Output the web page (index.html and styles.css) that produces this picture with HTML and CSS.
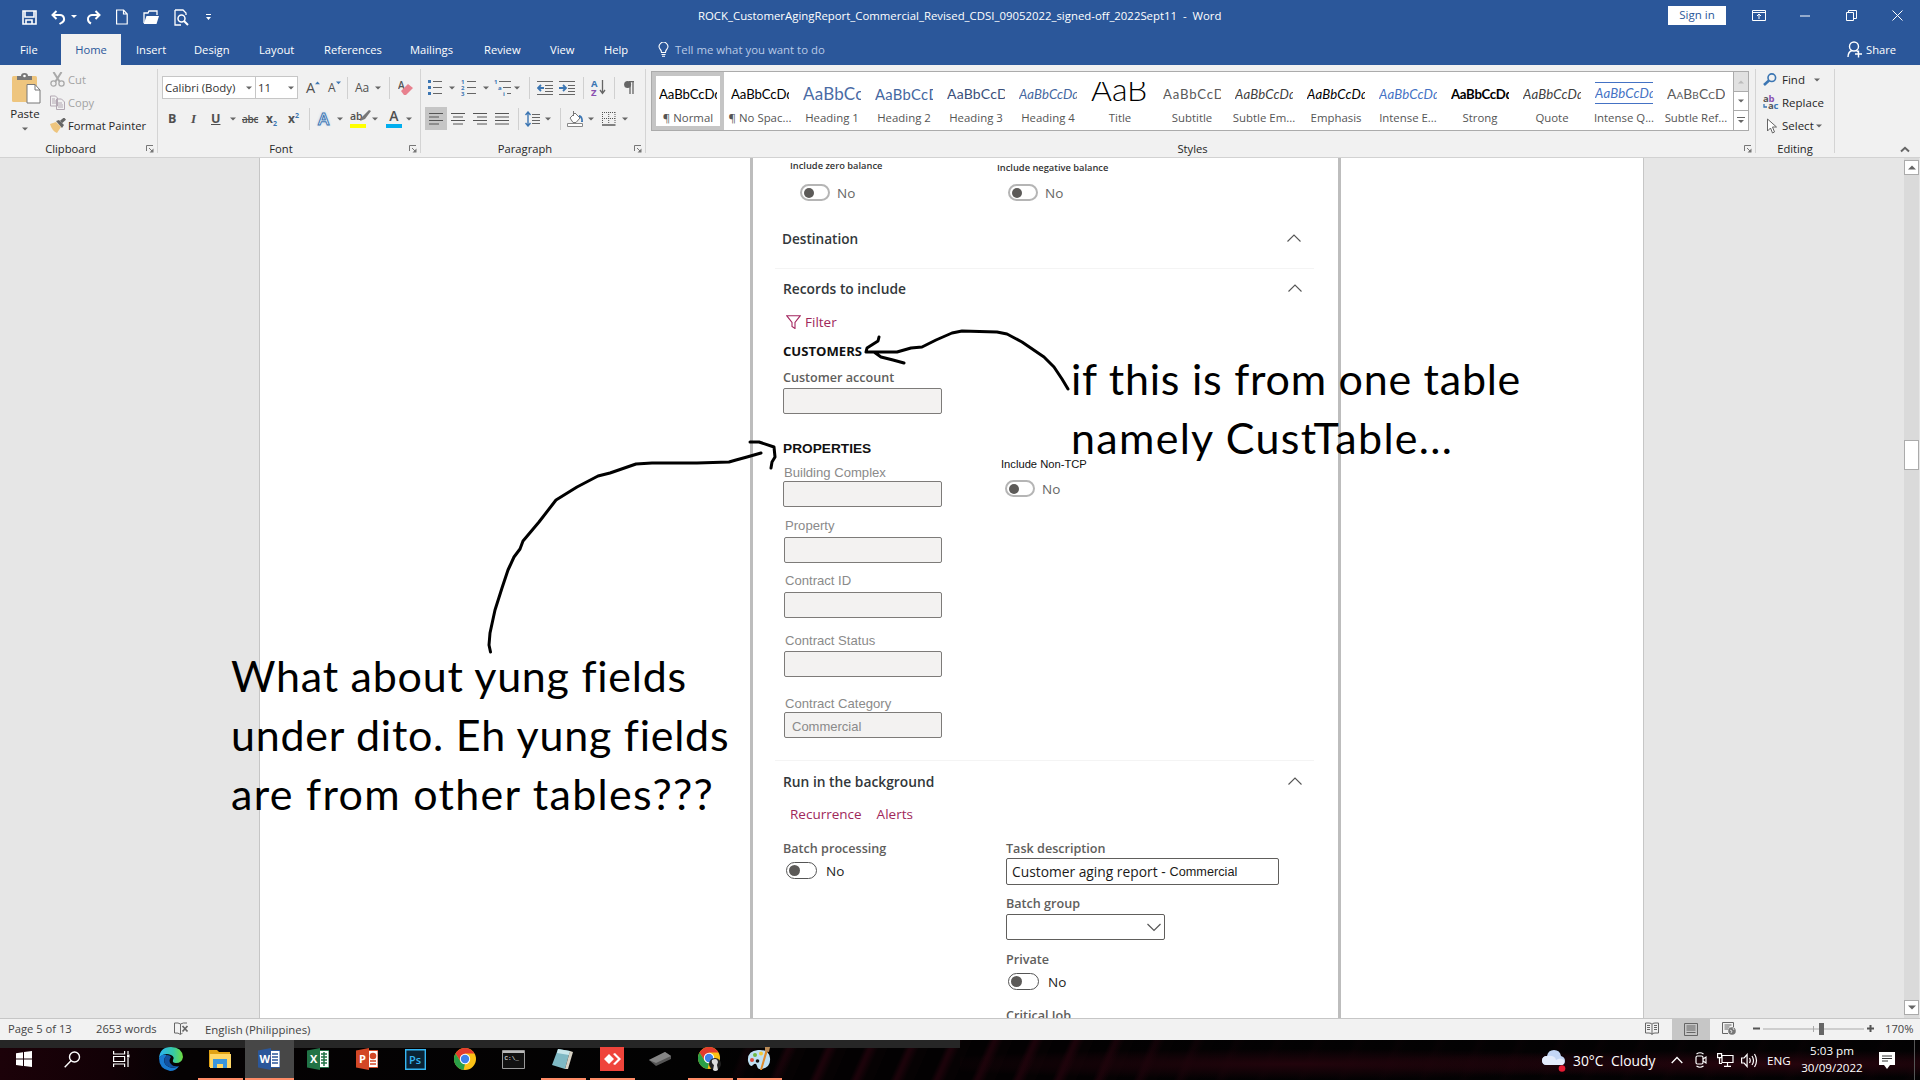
FILE: index.html
```html
<!DOCTYPE html>
<html lang="en">
<head>
<meta charset="utf-8">
<title>ROCK_CustomerAgingReport - Word</title>
<link rel="stylesheet" href="styles.css">
</head>
<body>
<svg class="defs" width="0" height="0">
  <symbol id="dd" viewBox="0 0 6 4"><path d="M0 0.5h6L3 3.5z" fill="#666"/></symbol>
  <symbol id="launch" viewBox="0 0 8 8"><path d="M.5 6V.5H7M3 3l3 3" fill="none" stroke="#777"/><path d="M7.500 3.500v4h-4z" fill="#777"/></symbol>
  <symbol id="caret" viewBox="0 0 14 8"><path d="M.5 7.500L7 1l6.500 6.500" fill="none" stroke="#555" stroke-width="1.100"/></symbol>
</svg>
<header class="titlebar">
  <div class="qat">
    <svg width="15" height="15" viewBox="0 0 15 15"><path d="M1 1h13v13H1zM3 1v6h9V1M4 14v-4h6v4" fill="none" stroke="#fff" stroke-width="1.600"/></svg>
    <svg width="15" height="15" viewBox="0 0 15 15"><path d="M5.500 1L1.500 5l4 4M2 5h7a4 4 0 0 1 2 7.500L8.500 14" fill="none" stroke="#fff" stroke-width="2"/></svg>
    <svg width="6" height="4" viewBox="0 0 6 4"><path d="M0 0h6L3 3z" fill="#fff"/></svg>
    <svg width="15" height="15" viewBox="0 0 15 15"><path d="M9.500 1l4 4-4 4M13 5H6a4 4 0 0 0-4 4.500q0 2.500 3 4" fill="none" stroke="#fff" stroke-width="2"/></svg>
    <svg width="12" height="16" viewBox="0 0 12 16"><path d="M.6 1h7l3.600 4v10H.6zM7.500 1v4H11" fill="none" stroke="#fff" stroke-width="1.200"/></svg>
    <svg width="16" height="15" viewBox="0 0 16 15"><path d="M1 13V3h4l1-2h8v4" fill="none" stroke="#fff" stroke-width="1.300"/><path d="M3.500 6H16l-2.500 8H.7z" fill="#fff"/></svg>
    <svg width="15" height="17" viewBox="0 0 15 17"><path d="M1 1h8l3 3v2M1 1v15h6" fill="none" stroke="#fff" stroke-width="1.300"/><circle cx="7.500" cy="9.500" r="3.500" fill="none" stroke="#fff" stroke-width="1.500"/><path d="M10 12l4 4" stroke="#fff" stroke-width="2"/></svg>
    <svg width="7" height="7" viewBox="0 0 7 7"><path d="M1 0h5v1H1zM1 3h5L3.500 6z" fill="#fff"/></svg>
  </div>
  <div class="doctitle">ROCK_CustomerAgingReport_Commercial_Revised_CDSI_09052022_signed-off_2022Sept11&nbsp; -&nbsp; Word</div>
  <div class="signin">Sign in</div>
  <div class="winbtn"><svg width="14" height="11" viewBox="0 0 14 11"><path d="M.5.5h13v10H.5zM.5 2.500h13M7 9V4M5 6l2-2 2 2" fill="none" stroke="#fff"/></svg></div>
  <div class="winbtn"><svg width="10" height="2"><path d="M0 1h10" stroke="#fff"/></svg></div>
  <div class="winbtn"><svg width="11" height="11" viewBox="0 0 11 11"><path d="M.5 2.500h7v8h-7zM2.500 2.500v-2h8v8H8" fill="none" stroke="#fff"/></svg></div>
  <div class="winbtn"><svg width="11" height="11" viewBox="0 0 11 11"><path d="M.5.5l10 10M10.500.5l-10 10" stroke="#fff"/></svg></div>
</header>
<nav class="tabs">
  <span>File</span><span class="on">Home</span><span>Insert</span><span>Design</span><span>Layout</span><span>References</span><span>Mailings</span><span>Review</span><span>View</span><span>Help</span>
  <svg width="11" height="15" viewBox="0 0 11 15"><path d="M3.500 10.500q0-2-1.500-3.500a4.300 4.300 0 1 1 7 0q-1.500 1.500-1.500 3.500zM3.500 12.500h4M4 14.300h3" fill="none" stroke="#fff" stroke-width="1.100"/></svg>
  <span class="tell">Tell me what you want to do</span>
  <svg width="16" height="17" viewBox="0 0 16 17"><circle cx="7" cy="5.500" r="4.500" fill="none" stroke="#fff" stroke-width="1.400"/><path d="M1 16q0-5 4-6.500M9 9l2 2M8 13h7M11.500 9.500v7" fill="none" stroke="#fff" stroke-width="1.400"/></svg>
  <span class="share">Share</span>
</nav>
<section class="ribbon">
  <div class="group clip">
    <div class="content clipgrid">
      <div class="paste">
        <svg width="29" height="31" viewBox="0 0 29 31"><rect x="0" y="3" width="25" height="26" rx="1.500" fill="#eec57e"/><path d="M5 3h4q0-3 3.500-3T16 3h4v4H5z" fill="#777"/><circle cx="12.500" cy="3" r="1.300" fill="#fff"/><path d="M15 11.500h8l5 5.500v13H15z" fill="#fff" stroke="#777"/><path d="M23 11.500V17h5" fill="none" stroke="#777"/></svg>
        <span>Paste</span><svg width="6" height="4"><use href="#dd"/></svg>
      </div>
      <div class="cliplist">
        <svg width="15" height="15" viewBox="0 0 15 15"><path d="M3.500 0l6 9.500M11.500 0l-6 9.500" stroke="#a9a9a9" stroke-width="2"/><circle cx="3.500" cy="11.500" r="2.600" fill="none" stroke="#a9a9a9" stroke-width="1.300"/><circle cx="11.500" cy="11.500" r="2.600" fill="none" stroke="#a9a9a9" stroke-width="1.300"/></svg><span class="dim">Cut</span>
        <svg width="16" height="15" viewBox="0 0 16 15"><path d="M.5 1h5l2 2v8h-7zM2 4h3M2 6h4M2 8h4M6.500 4h5l3 3v7.500h-8zM8 8h4M8 10h5M8 12h5" fill="#f1f1f1" stroke="#b3a8b3"/></svg><span class="dim">Copy</span>
        <svg width="16" height="15" viewBox="0 0 16 15"><path d="M0 6l6-2 5 5-4 6q-5-2-7-9z" fill="#eec57e"/><path d="M6 3l3-1 5 5-2 3z" fill="#666"/><path d="M11 4l4-3.500" stroke="#666" stroke-width="3"/></svg><span>Format Painter</span>
      </div>
    </div>
    <div class="glabel"><span>Clipboard</span><svg width="8" height="8"><use href="#launch"/></svg></div>
  </div>
  <div class="group font">
    <div class="content rows">
      <div class="frow1">
        <div class="combo fam"><span>Calibri (Body)</span><svg width="6" height="4"><use href="#dd"/></svg></div>
        <div class="combo size"><span>11</span><svg width="6" height="4"><use href="#dd"/></svg></div>
        <span class="g">A<svg width="5" height="4" viewBox="0 0 6 4"><path d="M0 3.500h6L3 .3z" fill="#3c76b3"/></svg></span><span class="g sm">A<svg width="5" height="4" viewBox="0 0 6 4"><path d="M0 .3h6L3 3.500z" fill="#3c76b3"/></svg></span><i class="sep"></i><span class="g aa">Aa</span><svg width="6" height="4"><use href="#dd"/></svg><i class="sep"></i>
        <svg width="16" height="16" viewBox="0 0 16 16"><text x="0" y="9" class="ticon">A</text><path d="M3 11l7-7 5 4-7 7H6z" fill="#e8818e"/></svg>
      </div>
      <div class="frow2">
        <b>B</b><i class="it">I</i><span class="ul">U</span><svg width="6" height="4"><use href="#dd"/></svg><span class="st">abc</span><span class="xx">x<sub>2</sub></span><span class="xx">x<sup>2</sup></span><i class="sep"></i><span class="glow">A</span><svg width="6" height="4"><use href="#dd"/></svg>
        <span class="bar hl">ab<svg width="12" height="12" viewBox="0 0 12 12"><path d="M1 11l2-4 7-7 2 1-6 8z" fill="#777"/></svg></span><svg width="6" height="4"><use href="#dd"/></svg><span class="bar fc">A</span><svg width="6" height="4"><use href="#dd"/></svg>
      </div>
    </div>
    <div class="glabel"><span>Font</span><svg width="8" height="8"><use href="#launch"/></svg></div>
  </div>
  <div class="group para">
    <div class="content rows">
      <div class="prow1">
        <svg width="14" height="16" viewBox="0 0 14 16"><path d="M0 0h3v3H0zM0 6h3v3H0zM0 12h3v3H0z" fill="#3c76b3"/><path d="M5 1.500h9M5 7.500h9M5 13.500h9" stroke="#666"/></svg><svg width="6" height="4"><use href="#dd"/></svg>
        <svg width="16" height="17" viewBox="0 0 16 17"><path d="M6 2.500h9M6 8.500h9M6 14.500h9" stroke="#666"/><text x="0" y="5" class="num">1</text><text x="0" y="11" class="num">2</text><text x="0" y="17" class="num">3</text></svg><svg width="6" height="4"><use href="#dd"/></svg>
        <svg width="18" height="17" viewBox="0 0 18 17"><path d="M5 2.500h12M9 8.500h8M13 14.500h4" stroke="#666"/><text x="0" y="5" class="num">1</text><text x="4" y="11" class="num">a</text><text x="9" y="17" class="num">i</text></svg><svg width="6" height="4"><use href="#dd"/></svg><i class="sep"></i>
        <svg width="16" height="14" viewBox="0 0 16 14"><path d="M0 .5h16M8 4.500h8M8 7.500h8M8 10.500h8M0 13.500h16" stroke="#666"/><path d="M1 7h6M4 4L1 7l3 3" fill="none" stroke="#3c76b3" stroke-width="1.800"/></svg>
        <svg width="16" height="14" viewBox="0 0 16 14"><path d="M0 .5h16M9 4.500h7M9 7.500h7M9 10.500h7M0 13.500h16" stroke="#666"/><path d="M0 7h7M4 4l3 3-3 3" fill="none" stroke="#3c76b3" stroke-width="1.800"/></svg><i class="sep"></i>
        <svg width="15" height="17" viewBox="0 0 15 17"><text x="0" y="8" class="az">A</text><text x="0" y="16.500" class="az z">Z</text><path d="M11.500 1v13M9 11l2.500 3.500L14 11" fill="none" stroke="#666" stroke-width="1.300"/></svg><i class="sep"></i>
        <svg width="11" height="13" viewBox="0 0 11 13"><path d="M10 .7H5M6 1v12M9 1v12" stroke="#666" stroke-width="1.300"/><circle cx="3.600" cy="3.500" r="3.500" fill="#666"/></svg>
      </div>
      <div class="prow2">
        <span class="sel"><svg width="14" height="12" viewBox="0 0 14 12"><path d="M0 .5h14M0 4h10M0 7.500h14M0 11h10" stroke="#555"/></svg></span>
        <svg width="14" height="12" viewBox="0 0 14 12"><path d="M0 .5h14M2 4h10M0 7.500h14M2 11h10" stroke="#555"/></svg>
        <svg width="14" height="12" viewBox="0 0 14 12"><path d="M0 .5h14M4 4h10M0 7.500h14M4 11h10" stroke="#555"/></svg>
        <svg width="14" height="12" viewBox="0 0 14 12"><path d="M0 .5h14M0 4h14M0 7.500h14M0 11h14" stroke="#555"/></svg><i class="sep"></i>
        <svg width="15" height="16" viewBox="0 0 15 16"><path d="M7 3.500h8M7 6.500h8M7 9.500h8M7 12.500h8" stroke="#666"/><path d="M3 1v14M.5 4L3 1l2.500 3M.5 12L3 15l2.500-3" fill="none" stroke="#3c76b3" stroke-width="1.400"/></svg><svg width="6" height="4"><use href="#dd"/></svg><i class="sep"></i>
        <svg width="17" height="16" viewBox="0 0 17 16"><path d="M.5 12.500h15v3H.5z" fill="#fff" stroke="#888"/><path d="M3 7l5-5 5 5-4 4.500H6zM6.500 0v5" fill="#fff" stroke="#777"/><path d="M12 4q4 0 4 7h-2q1-4-2-5z" fill="#3c76b3"/></svg><svg width="6" height="4"><use href="#dd"/></svg>
        <svg width="14" height="14" viewBox="0 0 14 14"><path d="M.5 0v12M13 0v12M6.700 0v12M0 .5h13M0 6.500h13" stroke="#555" stroke-dasharray="1 1"/><path d="M0 13h13.500" stroke="#444" stroke-width="1.300"/></svg><svg width="6" height="4"><use href="#dd"/></svg>
      </div>
    </div>
    <div class="glabel"><span>Paragraph</span><svg width="8" height="8"><use href="#launch"/></svg></div>
  </div>
  <div class="group styles">
    <div class="content">
      <div class="gallery">
        <div class="style picked"><p class="s blk">AaBbCcDd</p><span>¶ Normal</span></div>
        <div class="style"><p class="s blk">AaBbCcDd</p><span>¶ No Spac...</span></div>
        <div class="style"><p class="s h1">AaBbCc</p><span>Heading 1</span></div>
        <div class="style"><p class="s h2">AaBbCcD</p><span>Heading 2</span></div>
        <div class="style"><p class="s h3">AaBbCcD</p><span>Heading 3</span></div>
        <div class="style"><p class="s h4">AaBbCcDd</p><span>Heading 4</span></div>
        <div class="style"><p class="s ttl">AaB</p><span>Title</span></div>
        <div class="style"><p class="s sub">AaBbCcD</p><span>Subtitle</span></div>
        <div class="style"><p class="s em">AaBbCcDd</p><span>Subtle Em...</span></div>
        <div class="style"><p class="s em blk">AaBbCcDd</p><span>Emphasis</span></div>
        <div class="style"><p class="s em blu">AaBbCcDd</p><span>Intense E...</span></div>
        <div class="style"><p class="s strong">AaBbCcDd</p><span>Strong</span></div>
        <div class="style"><p class="s em">AaBbCcDd</p><span>Quote</span></div>
        <div class="style"><p class="s em blu lines">AaBbCcDd</p><span>Intense Q...</span></div>
        <div class="style"><p class="s caps">AaBbCcDd</p><span>Subtle Ref...</span></div>
        <div class="gscroll">
          <div class="off"><svg width="6" height="4" viewBox="0 0 6 4"><path d="M0 3.500h6L3 .5z" fill="#bbb"/></svg></div>
          <div><svg width="6" height="4"><use href="#dd"/></svg></div>
          <div><svg width="8" height="7" viewBox="0 0 8 7"><path d="M0 .5h8" stroke="#666"/><path d="M1 3h6L4 6z" fill="#666"/></svg></div>
        </div>
      </div>
    </div>
    <div class="glabel"><span>Styles</span><svg width="8" height="8"><use href="#launch"/></svg></div>
  </div>
  <div class="group edit">
    <div class="content editlist">
      <svg width="14" height="13" viewBox="0 0 14 13"><circle cx="8.800" cy="4.700" r="3.800" fill="none" stroke="#3c76b3" stroke-width="1.600"/><path d="M6 7.500L1 12" stroke="#3c76b3" stroke-width="2.600"/></svg><span>Find<svg class="far" width="6" height="4"><use href="#dd"/></svg></span>
      <svg width="17" height="17" viewBox="0 0 17 17"><text x="0" y="8" class="rep">a<tspan fill="#8a4fb0">b</tspan></text><text x="5" y="15" class="rep">a<tspan fill="#3c76b3">c</tspan></text><path d="M1 10v3h3" fill="none" stroke="#3c76b3" stroke-width="1.300"/></svg><span>Replace</span>
      <svg width="16" height="16" viewBox="0 0 16 16"><path d="M4.500 1v12l3-3 2 5 2-1-2-5h4z" fill="#fff" stroke="#666"/></svg><span>Select<svg class="near" width="6" height="4"><use href="#dd"/></svg></span>
    </div>
    <div class="glabel"><span>Editing</span></div>
  </div>
  <div class="collapse"><svg width="10" height="7" viewBox="0 0 10 7"><path d="M1 5.500L5 1.800l4 3.700" fill="none" stroke="#666" stroke-width="2"/></svg></div>
</section>

<main class="doc">
  <div class="page">
    <div class="panel">
      <div class="cols balance">
        <div><p class="tiny z">Include zero balance</p><div class="tg soft z"><i></i>No</div></div>
        <div><p class="tiny n">Include negative balance</p><div class="tg soft n"><i></i>No</div></div>
      </div>
      <div class="head dest"><span>Destination</span><svg width="14" height="8"><use href="#caret"/></svg></div>
      <div class="head rec"><span>Records to include</span><svg width="14" height="8"><use href="#caret"/></svg></div>
      <div class="filter"><svg width="15" height="14" viewBox="0 0 15 14"><path d="M.7.700h13.600L9 7.500v6L6 11.500v-4z" fill="none" stroke="#a4265f" stroke-width="1.100"/></svg>Filter</div>
      <p class="cap">CUSTOMERS</p>
      <p class="lab">Customer account</p>
      <div class="box"></div>
      <p class="cap ar">PROPERTIES</p>
      <div class="cols props">
        <div>
          <p class="al a1">Building Complex</p><div class="box b1"></div>
          <p class="al a2">Property</p><div class="box b2"></div>
          <p class="al a3">Contract ID</p><div class="box b2"></div>
          <p class="al a4">Contract Status</p><div class="box b4"></div>
          <p class="al a5">Contract Category</p><div class="box b5">Commercial</div>
        </div>
        <div><p class="nontcp">Include Non-TCP</p><div class="tg soft t"><i></i>No</div></div>
      </div>
      <div class="head run"><span>Run in the background</span><svg width="14" height="8"><use href="#caret"/></svg></div>
      <div class="links"><span>Recurrence</span><span>Alerts</span></div>
      <div class="cols batch">
        <div><p class="lab">Batch processing</p><div class="tg b"><i></i>No</div></div>
        <div>
          <p class="lab">Task description</p><div class="inp wide"><span>Customer aging report -</span><em>Commercial</em></div>
          <p class="lab bg">Batch group</p><div class="inp"><svg width="14" height="9" viewBox="0 0 14 9"><path d="M.5 1L7 7.500 13.500 1" fill="none" stroke="#555" stroke-width="1.200"/></svg></div>
          <p class="lab pv">Private</p><div class="tg p"><i></i>No</div>
          <p class="lab cj">Critical Job</p>
        </div>
      </div>
    </div>
  </div>
  <div class="vscroll">
    <div class="btn"><svg width="8" height="5" viewBox="0 0 8 5"><path d="M0 4.500h8L4 .5z" fill="#666"/></svg></div>
    <div class="thumb"></div>
    <div class="btn"><svg width="8" height="5" viewBox="0 0 8 5"><path d="M0 .5h8L4 4.500z" fill="#666"/></svg></div>
  </div>
  <svg class="ink" width="1920" height="860" viewBox="0 158 1920 860">
    <path d="M1068 389L1062 379 1054 367 1044 357 1022 342 1007 334 997 332 962 331 952 333 936 340 922 347 911 348 897 352 867 352M879 337L878 341 867 348 866 352 874 352 881 357 893 360 904 363"/>
    <path d="M490.500 652L489 645 490 633 495 610 502 588 508 570 514 557 520 549 523 541 539 522 556 500 577 487 598 476 610 473 636 464 652 463 697 463 729 462 736 460 747 457 761 453M750 442L759 442 774 447 775 457 772 462 771 468"/>
  </svg>
  <p class="note first"><span>if this is from one table</span><br><span class="loose">namely CustTable...</span></p>
  <p class="note second"><span>What about yung fields</span><br><span>under dito. Eh yung fields</span><br><span class="loose">are from other tables???</span></p>
</main>

<footer class="status">
  <span>Page 5 of 13</span><span>2653 words</span>
  <svg width="15" height="14" viewBox="0 0 15 14"><path d="M6.500 12V2q-2-1.500-6-1v10q4-.5 6 1.500 1-1 2-1.300M6.500 2Q9 .500 13 1" fill="none" stroke="#666"/><path d="M8.500 4l5 5.500M13.500 4l-5 5.500" stroke="#666" stroke-width="1.700"/></svg>
  <span class="lang">English (Philippines)</span>
  <svg width="14" height="13" viewBox="0 0 14 13"><path d="M7 2.500v10M.5 1H4q3 0 3 1.500Q7 1 10 1h3.500v10H10q-3 0-3 1.500Q7 11 4 11H.5zM2 3.500h3M2 5.500h3M2 7.500h3M9 3.500h3M9 5.500h3M9 7.500h3" fill="none" stroke="#666"/></svg>
  <div class="cur"><svg width="14" height="13" viewBox="0 0 14 13"><path d="M.5.500h13v12H.5zM2.500 3h9M2.500 5h9M2.500 7h9M2.500 9.500h9" fill="none" stroke="#666"/></svg></div>
  <svg width="14" height="13" viewBox="0 0 14 13"><path d="M6 11.500H.5V.500h11V5M2.500 3h7M2.500 5h5M2.500 7h4" fill="none" stroke="#666"/><circle cx="10" cy="9" r="3.800" fill="#777"/><path d="M8 8l2 1-1 2M11 6l1 2" stroke="#ddd" fill="none"/></svg>
  <svg width="7" height="3"><path d="M0 1.500h7" stroke="#555" stroke-width="2"/></svg>
  <svg width="101" height="12" viewBox="0 0 101 12"><path d="M0 6h101M50.500 3v6" stroke="#aaa"/><path d="M56 0h5v12h-5z" fill="#666"/></svg>
  <svg width="7" height="7"><path d="M0 3.500h7M3.500 0v7" stroke="#555" stroke-width="2"/></svg>
  <span>170%</span>
</footer>

<div class="taskbar">
  <div class="apps">
    <div><svg width="16" height="16" viewBox="0 0 16 16"><path d="M0 2.200l7-1v6.400H0zM8 1l8-1v7.600H8zM0 8.500h7v6.400l-7-1zM8 8.500h8V16l-8-1z" fill="#fff"/></svg></div>
    <div><svg width="17" height="17" viewBox="0 0 17 17"><circle cx="10.500" cy="6" r="5" fill="none" stroke="#fff" stroke-width="1.400"/><path d="M7 9.700L.7 16.300" stroke="#fff" stroke-width="1.400"/></svg></div>
    <div><svg width="17" height="16" viewBox="0 0 17 16"><path d="M.6 0v3h11V0M.6 5.500h11v5H.6zM.6 16v-3h11v3M15 0v3M15 7v9" fill="none" stroke="#fff" stroke-width="1.200"/><path d="M14 3.500h2.500v3H14z" fill="#fff"/></svg></div>
    <div><svg width="24" height="24" viewBox="0 0 24 24"><defs><linearGradient id="eg" x1="0" x2="1"><stop offset="0" stop-color="#2bb5f5"/><stop offset=".6" stop-color="#37c9a5"/><stop offset="1" stop-color="#6fdc3e"/></linearGradient></defs><path d="M0 11Q1 0 12 0t12 10q-1 6-7 6-4 0-3-3 2-3-2-5Q5 5 0 11z" fill="url(#eg)"/><path d="M0 11q3-5 8-3-5 5-1 10 5 5 13 1-3 5-9 5Q0 22 0 11z" fill="#1879d0"/><path d="M8 8q-5 5-1 10 5 5 13 1-6 1-8-2-3-3 0-7-1-2-4-2z" fill="#12519f"/></svg></div>
    <div class="open"><svg width="22" height="20" viewBox="0 0 22 20"><path d="M0 1h8l2 2h11v15H0z" fill="#e0a215"/><path d="M1 5h21v14H1z" fill="#ffd766"/><path d="M4 10h14v9h-4v-4H8v4H4z" fill="#3b97dd"/></svg></div>
    <div class="open active"><svg width="22" height="22" viewBox="0 0 22 22"><path d="M12 2.500h10v17H12z" fill="#fff" stroke="#2b579a"/><path d="M14 6h6M14 9h6M14 12h6M14 15h6" stroke="#2b579a" stroke-width="1.500"/><path d="M0 2.500L13 0v22L0 19.500z" fill="#2b579a"/><text x="1.500" y="15" class="logo">W</text></svg></div>
    <div><svg width="22" height="22" viewBox="0 0 22 22"><path d="M12 2.500h10v17H12z" fill="#fff" stroke="#217346"/><path d="M14 6h6M14 9h6M14 12h6M14 15h6M17 4v14" stroke="#217346" stroke-width="1.500"/><path d="M0 2.500L13 0v22L0 19.500z" fill="#217346"/><text x="3" y="15" class="logo">X</text></svg></div>
    <div><svg width="22" height="22" viewBox="0 0 22 22"><path d="M12 2.500h10v17H12z" fill="#fff" stroke="#d24726"/><circle cx="17" cy="8" r="3.300" fill="#d24726"/><path d="M14 13h6M14 16h6" stroke="#d24726" stroke-width="1.500"/><path d="M0 2.500L13 0v22L0 19.500z" fill="#d24726"/><text x="3" y="15" class="logo">P</text></svg></div>
    <div><svg width="21" height="21" viewBox="0 0 21 21"><path d="M.7.700h19.600v19.600H.7z" fill="#0a2233" stroke="#35b5f2" stroke-width="1.400"/><text x="4" y="15" class="ps">Ps</text></svg></div>
    <div><svg width="22" height="22" viewBox="0 0 22 22"><circle cx="11" cy="11" r="11" fill="#fbc116"/><path d="M1.500 5.500a11 11 0 0 1 19 0H11L6.500 13.500z" fill="#e33b2e"/><path d="M1.500 5.500l5 8L11 16l-1.500 6A11 11 0 0 1 1.500 5.500z" fill="#2a9f47"/><circle cx="11" cy="11" r="5.200" fill="#fff"/><circle cx="11" cy="11" r="4.200" fill="#4081ec"/></svg></div>
    <div><svg width="23" height="19" viewBox="0 0 23 19"><path d="M.5.500h22v18H.5z" fill="#111" stroke="#999"/><path d="M1 2h21" stroke="#bbb" stroke-width="2"/><text x="2.500" y="10" class="cmd">C:\_</text></svg></div>
    <div class="open"><svg width="23" height="22" viewBox="0 0 23 22"><path d="M7 1l12 2-5 18-13-4z" fill="#7fb9c4"/><path d="M7 1l12 2-1 4L6 5z" fill="#c8e6ea"/><path d="M19 3l3 1-5 17-3 0z" fill="#d8d2c4"/></svg></div>
    <div class="open"><svg width="24" height="24" viewBox="0 0 24 24"><path d="M0 0h24v24H0z" fill="#ef443b"/><path d="M9 7l5 5-5 5-5-5zM13 7l2-1 6 6-6 6-2-1 5-5z" fill="#fff"/></svg></div>
    <div><svg width="23" height="16" viewBox="0 0 23 16"><path d="M0 9L16 1l6 4v3L7 15z" fill="#555"/><path d="M0 9L16 1l6 4L7 12z" fill="#858585"/></svg></div>
    <div class="open"><svg width="23" height="25" viewBox="0 0 23 25"><circle cx="11" cy="11" r="11" fill="#fbc116"/><path d="M1.500 5.500a11 11 0 0 1 19 0H11L6.500 13.500z" fill="#e33b2e"/><path d="M1.500 5.500l5 8L11 16l-1.500 6A11 11 0 0 1 1.500 5.500z" fill="#2a9f47"/><circle cx="11" cy="11" r="5.200" fill="#fff"/><circle cx="11" cy="11" r="4.200" fill="#4081ec"/><circle cx="17" cy="17" r="6" fill="#222"/><path d="M14 13q5-3 6 2l-1 3 1 5q-3 2-5 0l1-5q-3-2-2-5z" fill="#ddd"/></svg></div>
    <div class="open"><svg width="24" height="24" viewBox="0 0 24 24"><path d="M1 14Q0 4 11 3t12 8-8 11q-4 1-5-3t-4-1-5-4z" fill="#bfe0f3"/><circle cx="5" cy="13" r="2" fill="#e04c3c"/><circle cx="8" cy="8" r="2" fill="#6fb944"/><circle cx="14" cy="6.500" r="2" fill="#f1c93a"/><circle cx="10.500" cy="14" r="1.800" fill="#111"/><path d="M21 3l-6 20-2 0 6-21z" fill="#e08a2c"/><path d="M18 0h5l-1 5-4-1z" fill="#b98a56"/></svg></div>
  </div>
  <div class="tray">
    <svg width="24" height="25" viewBox="0 0 24 25"><path d="M5 17q-5 0-5-4.500T5 8q1-6 7-6t7 6q4 1 4 5t-4 4z" fill="#c3d6f5"/><path d="M0 12q1-4 5-4 8-1 9 4 4-3 8 0 1 5-3 5H5q-5 0-5-5z" fill="#e4ecfb"/><circle cx="20" cy="20.500" r="3.300" fill="#e81a32"/></svg>
    <span class="w">30°C</span><span class="w">Cloudy</span>
    <svg width="12" height="8" viewBox="0 0 12 8"><path d="M.7 7L6 1.500 11.300 7" fill="none" stroke="#fff" stroke-width="1.300"/></svg>
    <svg width="12" height="16" viewBox="0 0 12 16"><rect x="1" y="4" width="7" height="8" rx="1.500" fill="none" stroke="#fff" stroke-width="1.200"/><path d="M8 7l3-2v6L8 9M1.500 2Q5-.500 8.500 2M1.500 14q3.500 2.500 7 0" fill="none" stroke="#fff" stroke-width="1.100"/></svg>
    <svg width="17" height="14" viewBox="0 0 17 14"><path d="M5 2.500h11v7H5zM10.500 9.500v4M7 13.300h7M.6.600h4v4h-4zM2.500 4.500v6H5" fill="none" stroke="#fff" stroke-width="1.200"/></svg>
    <svg width="17" height="15" viewBox="0 0 17 15"><path d="M.6 5h2.500l3-3.500v12l-3-3.500H.6zM8.500 5q1.500 2.500 0 5M11 3q3 4.500 0 9M13.500 1q4 6.500 0 13" fill="none" stroke="#fff" stroke-width="1.200"/></svg>
    <span>ENG</span>
    <div class="clock">5:03 pm<br>30/09/2022</div>
    <svg width="16" height="17" viewBox="0 0 16 17"><path d="M0 0h16v13h-5l-3 4-3-4H0z" fill="#fff"/><path d="M3 4h10M3 6.500h10M3 9h6" stroke="#333"/></svg>
    <i class="peek"></i>
  </div>
</div>
</body>
</html>
```
FILE: styles.css
```css
* { box-sizing: border-box; }
body { margin: 0; width: 1920px; height: 1080px; overflow: hidden; display: flex; flex-direction: column; font-family: "Open Sans", "Noto Sans", sans-serif; font-size: 11.2px; color: #262626; white-space: nowrap; }
p { margin: 0; }
svg { display: block; flex: none; }
.defs { display: none; }

/* title bar and tabs */
.titlebar { height: 34px; flex: none; background: #2b579a; color: #fff; display: grid; grid-template-columns: 698px 970px 67px 47px 46px 46px 46px; align-items: center; }
.qat { display: grid; grid-template-columns: 29px 20px 15px 30px 27px 31px 31px 10px; padding-left: 22px; align-items: center; }
.doctitle { font-size: 11.38px; margin-top: -3px; }
.signin { background: #fff; color: #2b579a; width: 58px; height: 19px; line-height: 18px; text-align: center; margin-top: -3px; font-size: 11.5px; }
.winbtn { display: flex; justify-content: center; margin-top: -3px; }
.tabs { height: 31px; flex: none; background: #2b579a; color: #fff; display: grid; grid-template-columns: 41px 95px 58px 65px 65px 86px 74px 66px 54px 54px 17px 1172px 19px auto; align-items: center; }
.tabs > span { line-height: 31px; }
.tabs > span:first-child { padding-left: 20px; }
.tabs > .on { background: #f1f1f1; color: #2b579a; margin-left: 20px; width: 60px; text-align: center; }
.tabs > .tell { color: #b9cae6; font-size: 11.4px; }

/* ribbon */
.ribbon { height: 93px; flex: none; background: #f1f1f1; border-bottom: 1px solid #d2d2d2; display: flex; padding-top: 4px; }
.group { height: 84px; border-right: 1px solid #d4d4d4; }
.content { height: 72px; }
.glabel { display: flex; line-height: 16px; text-align: center; align-items: center; }
.glabel span { flex: 1; }
.glabel svg { margin-right: 3px; margin-left: 5px; }
.clip { width: 158px; }
.font { width: 263px; }
.para { width: 225px; }
.styles { width: 1110px; }
.edit { width: 79px; }
.clipgrid { display: grid; grid-template-columns: 50px auto; }
.paste { display: flex; flex-direction: column; align-items: center; padding-top: 4px; padding-left: 3px; font-size: 11.5px; }
.paste span { line-height: 20px; margin-bottom: 3px; margin-right: 3px; }
.paste svg:last-child { margin-right: 4px; }
.cliplist { display: grid; grid-template-columns: 18px auto; grid-template-rows: repeat(3, 23px); align-items: center; margin-top: -1px; }
.dim { color: #a3a3a3; }
.rows > div { height: 31px; display: grid; align-items: center; }
.rows { padding-top: 3px; }
.frow1 { grid-template-columns: 94px 50px 22px 19px 8px 20px 14px 9px 16px; padding-left: 4px; }
.frow2 { grid-template-columns: 23px 19px 20px 12px 24px 22px 21px 9px 19px 13px 22px 14px 20px 6px; padding-left: 10px; color: #505050; }
.prow1 { grid-template-columns: 21px 12px 22px 11px 20px 15px 8px 22px 24px 8px 23px 10px 12px; padding-left: 7px; }
.prow2 { grid-template-columns: 26px 22px 22px 23px 7px 20px 15px 7px 21px 14px 20px 6px; padding-left: 4px; }
.sep { width: 1px; height: 22px; background: #d0d0d0; }
.combo { height: 23px; background: #fff; border: 1px solid #c6c6c6; display: flex; align-items: center; justify-content: space-between; padding: 0 3px 0 2px; color: #333; font-size: 11.4px; }
.combo.size { width: 43px; margin-left: -1px; }
.g { font-size: 14.5px; color: #505050; line-height: 20px; display: flex; align-items: flex-start; }
.g svg { margin-top: 3px; }
.g.sm { font-size: 12px; }
.g.aa { font-size: 12px; }
.ticon { font: 600 10px "Open Sans"; fill: #555; }
.num { font: 700 6px "Open Sans"; fill: #3c76b3; }
.az { font: 700 9.5px "Open Sans"; fill: #3c76b3; }
.az.z { fill: #8a4fb0; }
.rep { font: 700 9.5px "Open Sans"; fill: #555; letter-spacing: -.2px; }
.frow2 b { font-size: 12.5px; }
.it { font: italic 700 13px "Liberation Serif", serif; }
.ul { font-weight: 700; text-decoration: underline; font-size: 12.5px; padding-left: 1px; }
.st { text-decoration: line-through; font-weight: 600; font-size: 10px; letter-spacing: -.3px; }
.xx { font-weight: 700; font-size: 12px; line-height: 14px; }
.xx sub, .xx sup { font-size: 7px; color: #3c76b3; line-height: 0; }
.glow { font-size: 17px; line-height: 20px; font-weight: 600; color: #fff; -webkit-text-stroke: 1px #3c76b3; text-shadow: 0 0 3px #9cc3ea; }
.bar { height: 18px; line-height: 12px; display: flex; font-weight: 600; }
.hl { border-bottom: 4px solid #ff0; width: 16px; font-size: 10.5px; }
.hl svg { margin-left: -4px; }
.fc { border-bottom: 4px solid #00aeef; width: 16px; justify-content: center; font-size: 14px; }
.sel { background: #c6c6c6; width: 22px; height: 23px; display: flex; align-items: center; justify-content: center; }
.gallery { width: 1098px; height: 60px; border: 1px solid #ababab; background: #fff; display: flex; }
.styles .content { padding: 2px 0 0 5px; }
.style { width: 72px; height: 58px; text-align: center; color: #555; padding-top: 10px; flex: none; font-size: 11.4px; }
.style span { display: block; line-height: 16px; margin-top: 6px; }
.picked { border: 4px solid #c5c5c5; padding-top: 6px; }
.picked span { margin-left: -4px; margin-right: -4px; }
.s { width: 58px; height: 22px; line-height: 24px; overflow: hidden; margin-left: 7px; text-align: left; font-family: Lato, "Open Sans", sans-serif; font-size: 13.2px; letter-spacing: -.1px; color: #404040; }
.picked .s { margin-left: 3px; }
.strong, .ttl { color: #000; }
.strong { font-weight: 700; letter-spacing: -.3px; }
.h1 { font-size: 17px; color: #4a6ba5; letter-spacing: .2px; }
.h2 { font-size: 14.8px; color: #45679f; letter-spacing: .3px; }
.h3 { font-size: 14px; color: #3a4f7a; letter-spacing: .2px; }
.h4 { font-style: italic; color: #45679f; letter-spacing: .1px; }
.ttl { font-size: 32px; font-weight: 300; line-height: 14px; height: 24px; margin-bottom: -2px; }
.sub { color: #5a5a5a; letter-spacing: .8px; }
.em { font-style: italic; letter-spacing: .2px; }
.blk { color: #000; }
.blu { color: #4472c4; }
.lines { border-top: 1px solid #4472c4; border-bottom: 1px solid #4472c4; line-height: 21px; }
.caps { font-variant: small-caps; color: #5a5a5a; font-size: 13.8px; letter-spacing: .1px; }
.gscroll { margin-left: auto; width: 15px; display: grid; grid-template-rows: 20px 19px 19px; border-left: 1px solid #ababab; }
.gscroll div { display: flex; align-items: center; justify-content: center; border-bottom: 1px solid #ababab; }
.gscroll div:last-child { border-bottom: 0; }
.off { background: #e1e1e1; }
.editlist { display: grid; grid-template-columns: 19px auto; grid-template-rows: repeat(3, 23px); padding-left: 7px; align-items: center; align-content: start; font-size: 11.5px; margin-top: -1px; height: 73px; }
.editlist span { display: flex; align-items: center; }
.far { margin-left: 9px; }
.near { margin-left: 2px; }
.collapse { margin: 77px 0 0 65px; }

/* document area */
.doc { height: 860px; flex: none; background: #e6e6e6; display: flex; justify-content: space-between; position: relative; overflow: hidden; }
.page { margin-left: 259px; width: 1385px; border: solid #c6c6c6; border-width: 0 1px; background: #fff; }
.panel { margin-left: 490px; width: 591px; height: 860px; border: solid #bdbdbd; border-width: 0 3px; padding: 0 24px 0 22px; font-size: 13.5px; color: #333; }
.cols { display: grid; padding-left: 8px; }
.balance { grid-template-columns: 214px auto; height: 58px; }
.tiny { font-size: 9.3px; font-weight: 600; line-height: 18px; }
.tiny.z { margin: -1px 0 0 7px; height: 17px; }
.tiny.n { margin-top: 1px; }
.tg { height: 18px; display: flex; align-items: center; gap: 8px; color: #222; }
.tg i { width: 31px; height: 17px; border: 1px solid #555; border-radius: 9px; display: flex; align-items: center; padding-left: 2px; margin-top: -1px; }
.tg i::before { content: ""; width: 11px; height: 11px; border-radius: 50%; background: #5c5a58; }
.soft { color: #666; gap: 7px; }
.soft i { width: 30px; border: 2px solid #b5b5b5; padding-left: 2px; }
.soft i::before { width: 10px; height: 10px; }
.tg.z { margin: 10px 0 0 17px; }
.tg.n { margin: 7px 0 0 11px; }
.head { display: flex; justify-content: space-between; align-items: center; padding: 0 12px 0 8px; font-weight: 600; font-size: 13.8px; color: #32373a; }
.head svg { margin-top: -2px; }
.dest { height: 53px; padding: 0 13px 8px 7px; border-bottom: 1px solid #f4f4f4; font-size: 13.6px; }
.dest svg { margin-top: 0; }
.rec { height: 39px; }
.filter { height: 28px; display: flex; align-items: center; gap: 4px; padding-left: 11px; color: #a0285a; }
.cap { padding-left: 8px; line-height: 31px; font-weight: 700; color: #111; font-size: 13.1px; }
.lab { line-height: 22px; margin-bottom: -2px; color: #605e5c; font-weight: 600; font-size: 12.6px; }
.box { width: 159px; height: 26px; background: #f3f2f1; border: 1px solid #7d7b79; border-radius: 2px; margin-top: 1px; }
.panel > .box { margin-left: 8px; }
.panel > .lab { padding-left: 8px; height: 20px; }
.panel > .lab + .box { margin-top: 3px; }
.cap.ar { margin-top: 24px; line-height: 22px; height: 20px; font-family: "Liberation Sans", Arial, sans-serif; font-size: 13.700px; }
.props { grid-template-columns: 218px auto; }
.al { line-height: 20px; font-family: "Liberation Sans", Arial, sans-serif; color: #8a8a8a; font-size: 13.100px; padding-left: 1px; }
.a1 { margin-top: 5px; height: 20px; } .b1 { margin-top: -2px; }
.a2 { margin-top: 9px; padding-left: 2px; } .b2, .b4, .b5 { margin-left: 1px; width: 158px; }
.a3 { margin-top: 8px; padding-left: 2px; }
.a4 { margin-top: 13px; padding-left: 2px; } .b4 { margin-top: 0; }
.a5 { margin-top: 17px; padding-left: 2px; } .b5 { margin-top: -2px; padding-left: 7px; line-height: 27px; font-family: "Liberation Sans", Arial, sans-serif; font-size: 13px; color: #8a8a8a; }
.nontcp { margin-top: -4px; line-height: 20px; font-family: "Liberation Sans", Arial, sans-serif; font-size: 11.2px; color: #111; }
.tg.t { margin: 6px 0 0 4px; }
.run { margin-top: 22px; height: 42px; border-top: 1px solid #f4f4f4; }
.links { height: 23px; line-height: 25px; display: flex; gap: 15px; padding-left: 15px; color: #a0285a; }
.batch { grid-template-columns: 223px auto; padding-top: 13px; }
.tg.b { margin: 4px 0 0 3px; gap: 9px; }
.tg.p { margin: 4px 0 0 2px; gap: 9px; }
.inp { width: 159px; height: 26px; border: 1px solid #605e5c; border-radius: 2px; margin-top: 1px; display: flex; align-items: center; justify-content: flex-end; padding-right: 3px; }
.inp.wide { width: 273px; height: 27px; margin-top: 0; justify-content: flex-start; padding-left: 5px; color: #1b1a19; font-size: 13.8px; line-height: 20px; }
.inp em { font: 12.700px "Liberation Sans", Arial, sans-serif; margin-left: 4px; }
.batch .lab { height: 20px; margin-bottom: 0; }
.bg { margin-top: 8px; }
.pv { margin-top: 9px; }
.cj { margin-top: 14px; }
.vscroll { width: 17px; background: #dadada; border: solid #e6e6e6; border-width: 0 1px; padding: 2px 0 3px; display: flex; flex-direction: column; justify-content: space-between; }
.vscroll .btn { height: 15px; background: #fff; border: 1px solid #ababab; display: flex; align-items: center; justify-content: center; }
.vscroll .thumb { height: 30px; background: #fff; border: 1px solid #ababab; margin-top: -265px; }
.ink { position: absolute; left: 0; top: 0; fill: none; stroke: #000; stroke-width: 3; stroke-linecap: round; stroke-linejoin: round; }
.note { position: absolute; font-family: Lato, sans-serif; font-size: 43px; line-height: 59px; letter-spacing: .75px; color: #000; }
.loose { letter-spacing: 1.300px; }
.first { left: 1071px; top: 191px; }
.second { left: 231px; top: 488px; }

/* status bar */
.status { height: 22px; flex: none; background: #f2f2f2; border-top: 1px solid #c6c6c6; display: grid; align-items: center; padding: 0 0 3px 8px; color: #444; grid-template-columns: 88px 78px 31px 1440px 27px 50px 31px 10px 104px 18px auto; }
.lang { font-size: 11.4px; padding-top: 1px; }
.cur { width: 38px; height: 21px; background: #c6c6c6; display: flex; align-items: center; justify-content: center; margin-bottom: -2px; }

/* taskbar */
.taskbar { height: 40px; flex: none; display: flex; justify-content: space-between; background: linear-gradient(90deg, #1c0209 0, #120106 110px, #050203 180px, #020202 700px, transparent 800px, transparent 1080px, rgba(3, 2, 3, .85) 1250px), repeating-linear-gradient(114deg, #030102 0 15px, #1b030a 20px 22px, #060203 29px 37px); color: #fff; }
.apps { display: flex; width: 960px; background: linear-gradient(#262626 8px, transparent 8px); }
.apps > div { width: 49px; flex: none; display: flex; align-items: center; justify-content: center; border-bottom: 2px solid transparent; background-clip: padding-box; padding-right: 2px; }
.apps > .open { border-image: linear-gradient(90deg, transparent 4px, #ff8b66 4px, #ff8b66 45px, transparent 45px) 2; }
.apps > .active { background: #474747; border-image: none; border-bottom-color: #ff8b66; }
.logo { font: 700 11px "Open Sans"; fill: #fff; }
.ps { font: 600 11px "Open Sans"; fill: #35b5f2; }
.cmd { font: 6px "Liberation Mono"; fill: #fff; }
.tray { width: 960px; padding-left: 582px; display: grid; align-items: center; font-size: 11.6px; grid-template-columns: 31px 38px 60px 24px 22px 24px 26px 23px 89px 35px auto; background: radial-gradient(ellipse at 35% 60%, #22040c, transparent 45%), radial-gradient(ellipse at 85% 60%, #26040d, transparent 40%); }
.w { font-size: 13.8px; }
.clock { text-align: center; line-height: 17.500px; width: 62px; margin: -2px 0 0 11px; }
.peek { width: 1px; height: 40px; background: #555; }
```
